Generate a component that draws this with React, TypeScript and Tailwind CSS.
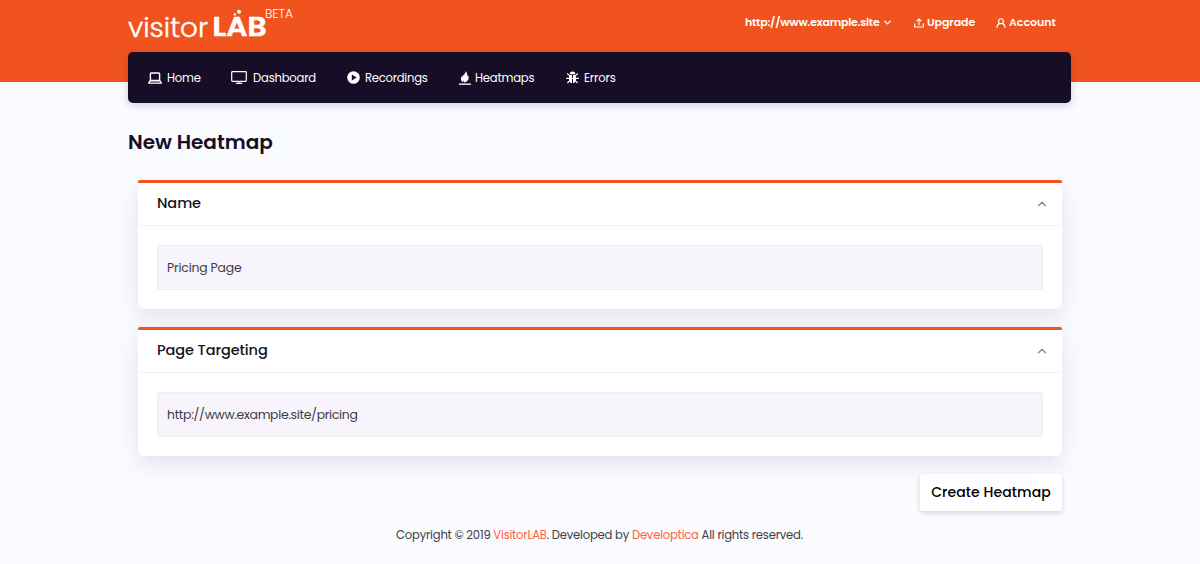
import React from 'react';
import { ChevronDown, ChevronUp } from 'lucide-react';

const LaptopIcon = () => (
  <svg viewBox="0 0 14 12" className="w-3.5 h-3 mt-px fill-none stroke-white" strokeWidth="1.4">
    <rect x="2.4" y="1" width="9.2" height="7.4" rx="0.8" />
    <path d="M2 8.8h10l1.300 2.300H.7z" strokeLinejoin="round" />
  </svg>
);

const ScreenIcon = () => (
  <svg viewBox="0 0 16 13" className="w-4 h-[13px] -ml-px mr-px fill-none stroke-white" strokeWidth="1.2">
    <rect x="0.7" y="0.7" width="14.6" height="9.6" rx="0.8" />
    <path d="M8 10.3v2M4.8 12.3h6.4" />
  </svg>
);

const PlayIcon = () => (
  <svg viewBox="0 0 13 13" className="w-[13px] h-[13px]">
    <circle cx="6.5" cy="6.5" r="6.3" className="fill-white" />
    <path d="M4.8 3.5v6l4.9-3z" className="fill-[#160d26]" />
  </svg>
);

const FlameIcon = () => (
  <svg viewBox="0 0 12 14" className="w-3 h-3.5 fill-white">
    <path d="M6.4 0C6.8 1.5 6 2.700 4.600 4 3.200 5.200 1.900 6.200 1.900 7.900c0 1.500 1 2.700 2.400 3.300-.2-.7 0-1.200.5-1.600.4.500.4 1.200.1 1.800 2.700-.3 4.800-2.200 4.800-4.700 0-1.200-.3-1.900-.8-2.500-.1.600-.3.900-.7 1.100C8.500 3.400 8.100 1.400 6.400 0z" />
    <rect x="0" y="12.5" width="12" height="1.3" />
  </svg>
);

const BugIcon = () => (
  <svg viewBox="0 0 13 13" className="w-[13px] h-[13px]">
    <path d="M3.6 3.3a2.9 2.9 0 0 1 5.800 0z" className="fill-white" />
    <path d="M3 4h3v8.300C4.200 12 3 10.700 3 8.800zM7 4h3v4.800c0 1.900-1.200 3.200-3 3.500z" className="fill-white" />
    <path d="M.2 7.300h12.600M1.200 2.500 3.500 4.600M11.800 2.500 9.500 4.600M1.400 12l2.200-2.200M11.600 12 9.400 9.800" className="fill-none stroke-white" strokeWidth="1.2" />
  </svg>
);

const UploadIcon = () => (
  <svg viewBox="0 0 10 10" className="w-[10px] h-[10px] fill-none stroke-white" strokeWidth="1.1" strokeLinecap="round" strokeLinejoin="round">
    <path d="M.7 5.800v3.200h8.600V5.800M5 6.800V1M2.900 3 5 .9 7.100 3" />
  </svg>
);

const UserIcon = () => (
  <svg viewBox="0 0 10 10" className="w-[10px] h-[10px] fill-none stroke-white" strokeWidth="1.1" strokeLinecap="round">
    <circle cx="5" cy="3.2" r="2.4" />
    <path d="M1 9.400c0-2.300 1.300-3.600 2.900-4M9 9.400c0-2.300-1.300-3.600-2.900-4" />
  </svg>
);

const Logo = () => (
  <svg viewBox="0 0 170 45" className="block w-[170px] h-[45px] fill-white">
    <text x="0" y="36.5" textLength="80" lengthAdjust="spacingAndGlyphs" stroke="white" strokeWidth="0.4" className="font-['Poppins','Lato',sans-serif] text-[27px] font-light">visitor</text>
    <text x="84.5" y="36.3" textLength="54" lengthAdjust="spacingAndGlyphs" stroke="white" strokeWidth="0.6" strokeLinejoin="round" className="font-['Poppins','Lato',sans-serif] text-[27px] font-semibold">LAB</text>
    <circle cx="111" cy="11.8" r="2" />
    <circle cx="106.8" cy="14.4" r="1.2" />
    <text x="137" y="18" textLength="28" lengthAdjust="spacingAndGlyphs" className="font-['Poppins','Lato',sans-serif] text-[12.5px] font-light">BETA</text>
  </svg>
);

const navItems = [
  { label: 'Home', icon: <LaptopIcon />, box: 'w-[84px]', text: 'tracking-[-0.25px]' , gap: 'gap-[5px]' },
  { label: 'Dashboard', icon: <ScreenIcon />, box: 'w-[115px]', text: 'tracking-[-0.2px]', gap: 'gap-[5px]' },
  { label: 'Recordings', icon: <PlayIcon />, box: 'w-[112px]', text: 'tracking-[-0.25px]', gap: 'gap-[5px]' },
  { label: 'Heatmaps', icon: <FlameIcon />, box: 'w-[107px]', text: 'tracking-[-0.2px]', gap: 'gap-[4px]' },
  { label: 'Errors', icon: <BugIcon />, box: 'w-[60px]', text: 'tracking-[-0.1px]', gap: 'gap-[5px]' },
];

interface PanelProps {
  title: string;
  value: string;
  valueClass: string;
}

function Panel({ title, value, valueClass }: PanelProps) {
  return (
    <section className="h-[129px] bg-white rounded-t-[2px] rounded-b-md shadow-[0_8px_22px_rgba(30,20,70,0.1)]">
      <div className="h-[3px] bg-[#f4511e] rounded-t-[2px]" />
      <div className="h-[43px] pl-[19px] pr-[13px] flex items-center justify-between border-b border-[#f1f1f5]">
        <h2 className="pb-[3px] text-[14.5px] leading-5 tracking-[-0.08px] font-medium text-[#14141c]">{title}</h2>
        <ChevronUp className="w-3.5 h-3.5 text-[#85858f]" />
      </div>
      <div className="px-[19px] pt-[19px]">
        <div className="h-[45px] flex items-center px-[9px] bg-[#f7f4fc] border border-[#f0edf5] rounded-[3px]">
          <span className={`pt-px text-[12.4px] leading-5 text-[#3d3b45] whitespace-nowrap ${valueClass}`}>{value}</span>
        </div>
      </div>
    </section>
  );
}

export default function App() {
  return (
    <div className="h-[564px] overflow-hidden bg-[#fafbff] font-['Poppins','Inter',sans-serif]">
      <header className="h-[82px] bg-[#f1531e]">
        <div className="w-[943px] ml-[128px] flex justify-between">
          <Logo />
          <div className="h-[45px] flex items-center text-[11px] font-semibold text-white whitespace-nowrap">
            <div className="w-[169px] flex items-center">
              <span className="w-[137px] tracking-[-0.22px]">http://www.example.site</span>
              <ChevronDown className="w-[11px] h-[11px]" strokeWidth={3} />
            </div>
            <div className="w-[82px] flex items-center gap-[3px]">
              <UploadIcon />
              <span className="tracking-[-0.08px]">Upgrade</span>
            </div>
            <div className="w-[75px] flex items-center gap-[3px]">
              <UserIcon />
              <span className="tracking-[-0.05px]">Account</span>
            </div>
          </div>
        </div>
      </header>

      <nav className="relative w-[943px] h-[51px] ml-[128px] -mt-[30px] pl-5 flex items-center bg-[#160d26] rounded-[5px] shadow-[0_2px_8px_rgba(30,20,70,0.2)]">
        {navItems.map((item) => (
          <a key={item.label} className={`flex items-center ${item.gap} ${item.box}`}>
            {item.icon}
            <span className={`text-[11.6px] leading-[18px] text-white ${item.text}`}>{item.label}</span>
          </a>
        ))}
      </nav>

      <main className="w-[943px] ml-[128px]">
        <h1 className="pt-[25px] h-[77px] text-[20px] leading-[28px] font-semibold text-[#160d26]">New Heatmap</h1>
        <div className="w-[924px] ml-[10px] flex flex-col gap-[18px]">
          <Panel title="Name" value="Pricing Page" valueClass="tracking-[-0.18px]" />
          <Panel title="Page Targeting" value="http://www.example.site/pricing" valueClass="tracking-[-0.3px]" />
          <div className="flex justify-end">
            <button className="w-[142px] h-[37px] bg-white rounded-[3px] text-[14px] tracking-[0.08px] font-medium text-black whitespace-nowrap shadow-[0_2px_5px_rgba(20,20,50,0.16)]">
              Create Heatmap
            </button>
          </div>
        </div>
      </main>

      <footer className="mt-[14px] pr-px text-center text-[11.6px] leading-[20px] tracking-[-0.21px] text-[#414049]">
        Copyright © 2019 <a className="text-[#ff6242]">VisitorLAB</a>. Developed by <a className="text-[#ff6242]">Developtica</a> All rights reserved.
      </footer>
    </div>
  );
}
